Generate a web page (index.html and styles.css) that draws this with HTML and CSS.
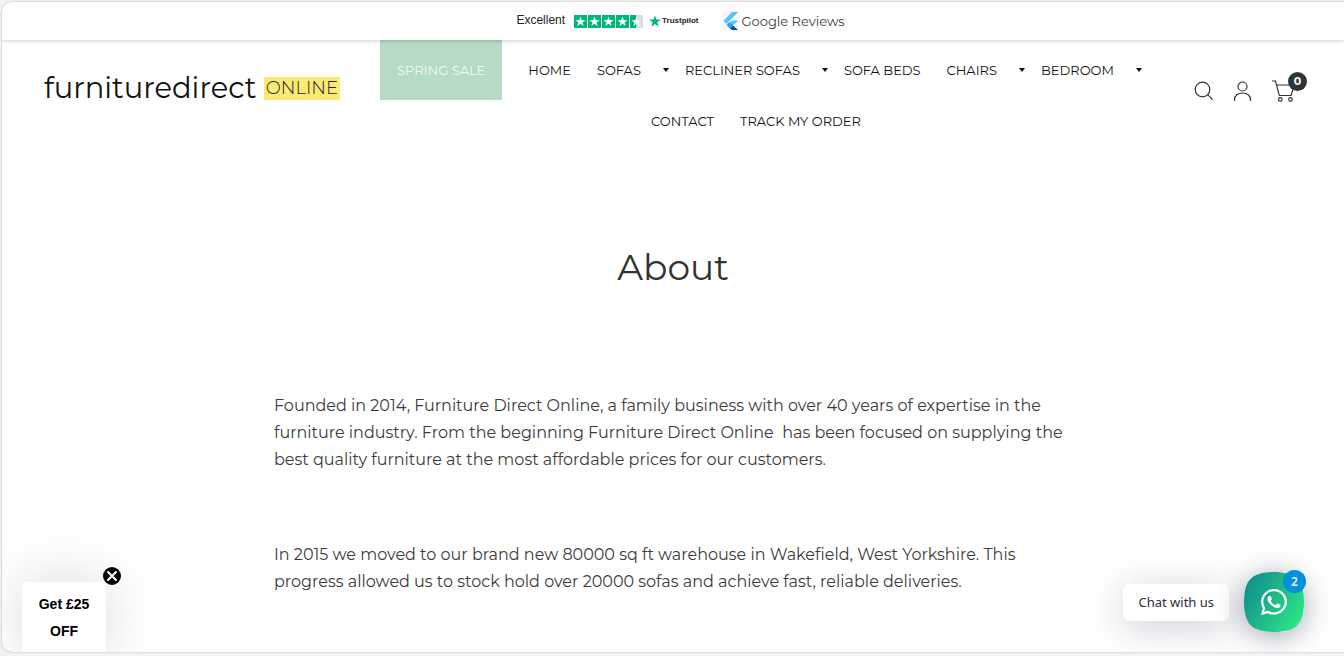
FILE: index.html
```html
<!DOCTYPE html>
<html lang="en">
<head>
<meta charset="utf-8">
<meta name="viewport" content="width=device-width, initial-scale=1">
<title>About – Furniture Direct Online</title>
<link rel="stylesheet" href="styles.css">
</head>
<body>
<div class="frame">
  <div class="topbar">
    <a class="trust" href="#">
      <span class="trust-word">Excellent</span>
      <svg class="stars" viewBox="0 0 69 13" role="img" aria-label="4.5 out of 5 stars">
        <defs><path id="star" d="M6.5 1.6l1.3 3.6h3.8L8.5 7.4l1.2 3.7-3.2-2.3-3.2 2.3 1.2-3.7L1.400 5.200h3.800z"/></defs>
        <g fill="#00b67a"><path d="M0 0h13v13H0zM14 0h13v13H14zM28 0h13v13H28zM42 0h13v13H42zM56 0h6.500v13H56z"/></g>
        <path fill="#dcdce6" d="M62.500 0H69v13h-6.500z"/>
        <g fill="#fff"><use href="#star"/><use href="#star" x="14"/><use href="#star" x="28"/><use href="#star" x="42"/><use href="#star" x="56"/></g>
      </svg>
      <span class="pilot"><svg viewBox="1 1 11 11" width="12" height="12" aria-hidden="true"><path fill="#00b67a" d="M6.500 1.200l1.300 4h4.200L8.600 7.600l1.300 4.100-3.400-2.500-3.400 2.500 1.300-4.100L1 5.200h4.200z"/></svg>Trustpilot</span>
    </a>
    <a class="google" href="#">
      <svg viewBox="0 0 16 20" width="16" height="20" aria-hidden="true"><path fill="#f6f6f8" d="M0 0h16v20H0z"/><path fill="#54c5f8" d="M10 1h6L4.500 13l-3-3.300zM10 9.500h6L10.500 15l-5-1z"/><path fill="#29a3ec" d="M4.500 14l3-3 3.500 3.500-3 3z"/><path fill="#01579b" d="M8 17.500l3-3 5 4.500h-6z"/></svg>
      Google Reviews
    </a>
  </div>

  <header class="header">
    <a class="logo" href="#"><span class="logo-name">furnituredirect</span><span class="logo-tag">ONLINE</span></a>
    <nav class="nav" aria-label="Main">
      <ul class="menu">
        <li class="item"><a class="sale" href="#">SPRING SALE</a></li>
        <li class="item"><a class="link" href="#">HOME</a></li>
        <li class="item sub"><a class="link" href="#">SOFAS</a></li>
        <li class="item sub"><a class="link" href="#">RECLINER SOFAS</a></li>
        <li class="item"><a class="link" href="#">SOFA BEDS</a></li>
        <li class="item sub"><a class="link" href="#">CHAIRS</a></li>
        <li class="item sub"><a class="link" href="#">BEDROOM</a></li>
        <li class="item"><a class="link" href="#">CONTACT</a></li>
        <li class="item"><a class="link" href="#">TRACK MY ORDER</a></li>
      </ul>
    </nav>
    <div class="tools">
      <button class="tool" type="button" aria-label="Search"><svg viewBox="0 0 20 20" width="20" height="20"><circle cx="8.500" cy="8.500" r="7.300"/><path d="M13.700 13.700l5 5"/></svg></button>
      <button class="tool" type="button" aria-label="Account"><svg viewBox="0 0 20 20" width="20" height="20"><circle cx="9.500" cy="5.500" r="4.500"/><path d="M1.500 20v-1.500c0-4 3.500-6.500 8-6.500s8 2.500 8 6.500V20"/></svg></button>
      <button class="tool cart" type="button" aria-label="Cart"><svg viewBox="0 0 24 22" width="24" height="22"><path d="M0 1h3.500l3.800 14.500H19L22.500 5H4.800"/><circle cx="8.300" cy="19.500" r="1.800"/><circle cx="18.500" cy="19.500" r="1.800"/></svg><span class="count">0</span></button>
    </div>
  </header>

  <main class="main">
    <h1 class="title">About</h1>
    <div class="story">
      <p class="para">Founded in 2014, Furniture Direct Online, a family business with over 40 years of expertise in the furniture industry. From the beginning Furniture Direct Online&nbsp; has been focused on supplying the best quality furniture at the most affordable prices for our customers.</p>
      <p class="para">In 2015 we moved to our brand new 80000 sq ft warehouse in Wakefield, West Yorkshire. This progress allowed us to stock hold over 20000 sofas and achieve fast, reliable deliveries.</p>
    </div>
  </main>

  <aside class="offer">
    <button class="offer-open" type="button">Get £25 OFF</button>
    <button class="offer-close" type="button" aria-label="Close offer"><svg viewBox="0 0 18 18" width="18" height="18"><circle cx="9" cy="9" r="9"/><path d="M5 5l8 8M13 5l-8 8" stroke="#fff" stroke-width="2" stroke-linecap="round"/></svg></button>
  </aside>

  <aside class="chat">
    <span class="chat-label" id="chat-label">Chat with us</span>
    <button class="chat-button" type="button" aria-labelledby="chat-label">
      <svg viewBox="0 0 60 60" width="60" height="60" aria-hidden="true">
        <defs><linearGradient id="chat-fill" x1="0" y1="0.200" x2="1" y2="0.800"><stop offset="0" stop-color="#118c8c"/><stop offset="1" stop-color="#2de986"/></linearGradient></defs>
        <path fill="url(#chat-fill)" d="M30 0C52 0 60 8 60 30S52 60 30 60 0 52 0 30 8 0 30 0z"/>
        <g transform="translate(17 17) scale(1.080)" fill="#fff"><path d="M17.472 14.382c-.297-.149-1.758-.867-2.030-.967-.273-.099-.471-.148-.670.150-.197.297-.767.966-.940 1.164-.173.199-.347.223-.644.075-.297-.150-1.255-.463-2.390-1.475-.883-.788-1.480-1.761-1.653-2.059-.173-.297-.018-.458.130-.606.134-.133.298-.347.446-.520.149-.174.198-.298.298-.497.099-.198.050-.371-.025-.520-.075-.149-.669-1.612-.916-2.207-.242-.579-.487-.500-.669-.510-.173-.008-.371-.010-.570-.010-.198 0-.520.074-.792.372-.272.297-1.040 1.016-1.040 2.479 0 1.462 1.065 2.875 1.213 3.074.149.198 2.096 3.200 5.077 4.487.709.306 1.262.489 1.694.625.712.227 1.360.195 1.871.118.571-.085 1.758-.719 2.006-1.413.248-.694.248-1.289.173-1.413-.074-.124-.272-.198-.570-.347m-5.421 7.403h-.004a9.870 9.870 0 01-5.031-1.378l-.361-.214-3.741.982.998-3.648-.235-.374a9.860 9.860 0 01-1.510-5.260c.001-5.450 4.436-9.884 9.888-9.884 2.640 0 5.122 1.030 6.988 2.898a9.825 9.825 0 012.893 6.994c-.003 5.450-4.437 9.884-9.885 9.884m8.413-18.297A11.815 11.815 0 0012.050 0C5.495 0 .160 5.335.157 11.892c0 2.096.547 4.142 1.588 5.945L.057 24l6.305-1.654a11.882 11.882 0 005.683 1.448h.005c6.554 0 11.890-5.335 11.893-11.893a11.821 11.821 0 00-3.480-8.413z"/></g>
      </svg>
      <span class="unread">2</span>
    </button>
  </aside>
</div>
</body>
</html>
```

FILE: styles.css
```css
* { box-sizing: border-box; }
html, body { height: 100%; margin: 0; }
body {
  padding: 2px 0 4px 2px;
  background: #f3f3f3;
  color: #3c3c3c;
  font-family: Montserrat, Inter, sans-serif;
  overflow: hidden;
}
a { color: inherit; text-decoration: none; }
button { border: 0; padding: 0; background: none; font: inherit; color: inherit; cursor: pointer; }
svg { display: block; }

.frame {
  position: relative;
  height: 100%;
  overflow: hidden;
  background: #fff;
  border-radius: 10px 0 0 10px;
  box-shadow: 0 0 2px rgba(0, 0, 0, 0.35);
}

.topbar {
  position: relative;
  z-index: 1;
  display: flex;
  justify-content: center;
  align-items: center;
  gap: 23px;
  height: 38px;
  padding-left: 15px;
  background: #fff;
  box-shadow: 0 1px 4px rgba(0, 0, 0, 0.2);
}
.trust { display: flex; align-items: center; gap: 9px; }
.trust-word { padding-bottom: 2px; font: 12px/16px "Liberation Sans", sans-serif; color: #222; }
.stars { width: 69px; height: 13px; }
.pilot { display: flex; align-items: center; gap: 1px; margin-left: -3px; font: bold 8px/14px "Liberation Sans", sans-serif; color: #222; }
.google { display: flex; align-items: center; gap: 4px; font-size: 13px; }

.header {
  display: grid;
  grid-template-columns: 296px minmax(0, 1fr) 113px;
  column-gap: 20px;
  padding: 0 37px 0 42px;
}
.logo { display: flex; align-items: center; justify-content: space-between; height: 34px; margin-top: 31px; color: #111; white-space: nowrap; }
.logo-name { font-size: 29px; line-height: 34px; }
.logo-tag { padding: 0 2px; background: #fbe975; font-size: 18px; line-height: 23px; font-weight: 300; color: #222; }

.nav { padding-right: 22px; }
.menu { display: flex; flex-wrap: wrap; justify-content: center; align-items: center; margin: 0; padding: 0; list-style: none; color: #111; font-size: 13px; }
.item { display: flex; align-items: center; line-height: 42px; white-space: nowrap; }
.link { padding: 0 13px; }
.sale { margin: 0 13px; padding: 0 17px; background: #b5dac5; color: #f4fbf7; line-height: 60px; }
.sub::after { content: ""; margin: 0 3px 0 9px; border: solid transparent; border-width: 4px 3px 0; border-top-color: #111; }

.tools { display: flex; justify-content: space-between; align-items: center; height: 24px; margin-top: 39px; }
.tool { position: relative; }
.tool svg { fill: none; stroke: #333; stroke-width: 1.2; }
.cart { padding-right: 11px; }
.count { position: absolute; top: -8px; right: 0; width: 19px; height: 19px; border-radius: 50%; background: #2d3538; color: #fff; font-size: 11px; font-weight: 700; line-height: 18px; text-align: center; }

.main { padding: 102px 24px 0; }
.title { margin: 0; text-align: center; font-size: 36px; font-weight: 400; line-height: 46px; color: #333; }
.story { max-width: 798px; margin: 102px auto 0; font-size: 16px; line-height: 27px; }
.para { margin: 0 0 68px; }

.offer { position: absolute; left: 20px; bottom: 0; }
.offer-open { width: 84px; height: 70px; padding: 2px 12px 0; border-radius: 4px 4px 0 0; background: #fff; box-shadow: 0 0 60px rgba(0, 0, 0, 0.16); color: #000; font: bold 14px/27px "Liberation Sans", sans-serif; }
.offer-close { position: absolute; top: -15px; right: -15px; }

.chat { position: absolute; right: 40px; bottom: 20px; display: flex; align-items: center; gap: 15px; }
.chat-label { padding: 0 15px; border-radius: 7px; background: #fff; box-shadow: 0 6px 36px rgba(20, 30, 60, 0.22); color: #2b2e3a; font: 13px/37px "Noto Sans", sans-serif; }
.chat-button { position: relative; border-radius: 24px; box-shadow: 0 4px 28px rgba(20, 30, 60, 0.4); }
.unread { position: absolute; top: -2px; right: -2px; width: 23px; height: 23px; border-radius: 50%; background: #0590db; color: #e6f4fc; font: 600 12px/23px "Noto Sans", sans-serif; text-align: center; }
```
